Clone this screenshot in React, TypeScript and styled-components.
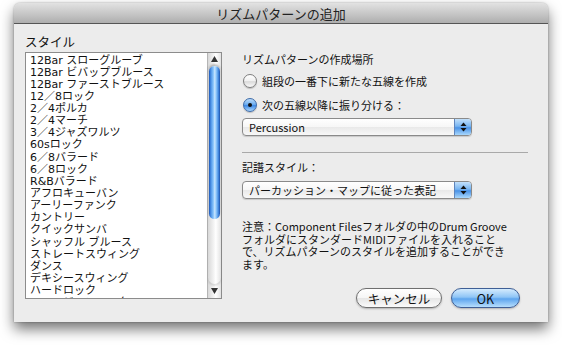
import React from 'react';
import styled, {createGlobalStyle} from 'styled-components';

const GlobalStyle = createGlobalStyle`
  html, body {
    margin: 0;
    padding: 0;
    background: #ffffff;
  }
  body {
    font-family: "Noto Sans CJK JP", "Liberation Sans", sans-serif;
    color: #111;
  }
`;

const Page = styled.div`
  width: 562px;
  height: 345px;
  padding: 3px 0 0 14px;
  box-sizing: border-box;
`;

const Window = styled.div`
  width: 534px;
  height: 319px;
  display: flex;
  flex-direction: column;
  background: #ececec;
  border-radius: 6px 6px 0 0;
  box-shadow: 0 7px 14px rgba(0, 0, 0, 0.55), 0 0 2px rgba(0, 0, 0, 0.35);
  overflow: hidden;
`;

const TitleBar = styled.div`
  height: 20px;
  flex: none;
  display: flex;
  align-items: center;
  justify-content: center;
  background: linear-gradient(#e2e2e2 0%, #cbcbcb 45%, #aeaeae 100%);
  border-bottom: 1px solid #555;
  font-size: 13px;
  color: #222;
`;

const Body = styled.div`
  flex: 1;
  display: flex;
  padding: 11px 0 0 11px;
`;

const LeftCol = styled.div`
  width: 197px;
  display: flex;
  flex-direction: column;
`;

const Label = styled.div<{$top?: number; $size?: number}>`
  font-size: ${p => p.$size ?? 11}px;
  line-height: 13px;
  margin-top: ${p => p.$top ?? 0}px;
  white-space: nowrap;
`;

const ListBox = styled.div`
  margin-top: 4px;
  height: 247px;
  box-sizing: border-box;
  border: 1px solid #8c8c8c;
  background: #fff;
  display: flex;
`;

const Items = styled.div`
  flex: 1;
  overflow: hidden;
  padding: 1.5px 0 0 4px;
`;

const Item = styled.div`
  font-family: "DejaVu Sans", "Noto Sans CJK JP", sans-serif;
  font-size: 11px;
  line-height: 12.15px;
  height: 12.15px;
  white-space: nowrap;
`;

const ScrollBar = styled.div`
  width: 13px;
  flex: none;
  display: flex;
  flex-direction: column;
  border-left: 1px solid #b5b5b5;
  background: linear-gradient(90deg, #d8d8d8, #f4f4f4 45%, #ffffff 60%, #e2e2e2);
`;

const Arrow = styled.div<{$h: number}>`
  height: ${p => p.$h}px;
  display: flex;
  align-items: center;
  justify-content: center;
`;

const Track = styled.div`
  flex: 1;
  display: flex;
  flex-direction: column;
  padding: 1px 0;
  border-radius: 0 0 7px 7px;
  box-shadow: 0 2px 2px rgba(0, 0, 0, 0.12);
`;

const Thumb = styled.div`
  height: 153px;
  margin: 0 1px;
  border-radius: 6px;
  background: linear-gradient(90deg, #1c56b8 0%, #4d94e8 18%, #8cc6fb 40%, #c8e6ff 52%, #7cbaf7 70%, #3a7fd9 88%, #1b4fa8 100%);
  box-shadow: 0 -2px 2px rgba(0, 0, 0, 0.25);
`;

const RightCol = styled.div`
  flex: 1;
  display: flex;
  flex-direction: column;
  margin-left: 20px;
  padding: 18px 20px 14px 0;
`;

const RadioRow = styled.div<{$top: number}>`
  display: flex;
  align-items: center;
  height: 16px;
  margin-top: ${p => p.$top}px;
  margin-left: 1px;
  gap: 5px;
  font-size: 11px;
`;

const Radio = styled.span<{$on?: boolean}>`
  width: 14px;
  height: 14px;
  box-sizing: border-box;
  border-radius: 50%;
  position: relative;
  border: 1px solid ${p => (p.$on ? '#3d6aa8' : '#7d7d7d')};
  background: ${p =>
    p.$on
      ? 'linear-gradient(#bcdcfa 0%, #6eaef0 45%, #3f8ae6 55%, #a9d6fd 100%)'
      : 'linear-gradient(#ffffff 0%, #f0f0f0 50%, #dadada 55%, #fbfbfb 100%)'};
  box-shadow: 0 1px 1px rgba(0, 0, 0, 0.2);

  &::after {
    content: '';
    display: ${p => (p.$on ? 'block' : 'none')};
    position: absolute;
    left: 4px;
    top: 4px;
    width: 4px;
    height: 4px;
    border-radius: 50%;
    background: #111;
  }
`;

const Popup = styled.div<{$top: number}>`
  margin-top: ${p => p.$top}px;
  width: 230px;
  height: 18px;
  box-sizing: border-box;
  border: 1px solid #8a8a8a;
  border-radius: 4px;
  display: flex;
  overflow: hidden;
  background: linear-gradient(#ffffff 0%, #f7f7f7 48%, #e9e9e9 52%, #f8f8f8 100%);
  box-shadow: 0 1px 1px rgba(0, 0, 0, 0.15);
`;

const PopupText = styled.div`
  flex: 1;
  padding-left: 6px;
  font-size: 11px;
  line-height: 16px;
  white-space: nowrap;
`;

const PopupArrows = styled.div`
  width: 16px;
  display: flex;
  align-items: center;
  justify-content: center;
  border-left: 1px solid #5f85bd;
  background: linear-gradient(#c2e0fb 0%, #78b5f1 45%, #4a92e6 55%, #a9d8fd 100%);
`;

const Separator = styled.div`
  margin-top: 16px;
  height: 1px;
  background: #a9a9a9;
`;

const Note = styled.div`
  margin-top: 21px;
  font-size: 11px;
  line-height: 12.5px;
  white-space: nowrap;
`;

const ButtonRow = styled.div`
  margin-top: auto;
  display: flex;
  justify-content: flex-end;
  gap: 9px;
  padding-right: 8px;
`;

const Button = styled.div<{$primary?: boolean; $w: number}>`
  width: ${p => p.$w}px;
  height: 20px;
  box-sizing: border-box;
  border-radius: 10px;
  display: flex;
  align-items: center;
  justify-content: center;
  font-size: 12.5px;
  color: #111;
  border: 1px solid ${p => (p.$primary ? '#3f5f96' : '#6f6f6f')};
  background: ${p =>
    p.$primary
      ? 'linear-gradient(#d4ebfd 0%, #8fc5f6 45%, #5ea5ee 55%, #b6defd 100%)'
      : 'linear-gradient(#ffffff 0%, #f6f6f6 48%, #e6e6e6 52%, #fafafa 100%)'};
  box-shadow: 0 1px 2px rgba(0, 0, 0, 0.25);
`;

const UpDown = () => (
  <svg width="7" height="10" viewBox="0 0 7 10">
    <polygon points="3.5,0.5 6.5,4 0.5,4" fill="#111" />
    <polygon points="0.5,6 6.5,6 3.5,9.5" fill="#111" />
  </svg>
);

const Tri = ({down}: {down?: boolean}) => (
  <svg width="7" height="6" viewBox="0 0 7 6">
    <polygon points={down ? '0,0 7,0 3.5,6' : '3.5,0 7,6 0,6'} fill="#333" />
  </svg>
);

const styles = [
  '12Bar スローグルーブ',
  '12Bar ビバップブルース',
  '12Bar ファーストブルース',
  '12／8ロック',
  '2／4ポルカ',
  '2／4マーチ',
  '3／4ジャズワルツ',
  '60sロック',
  '6／8バラード',
  '6／8ロック',
  'R&Bバラード',
  'アフロキューバン',
  'アーリーファンク',
  'カントリー',
  'クイックサンバ',
  'シャッフル ブルース',
  'ストレートスウィング',
  'ダンス',
  'デキシースウィング',
  'ハードロック',
  'フュージョンロック',
];

const App = () => {
  return (
    <Page>
      <GlobalStyle />
      <Window>
        <TitleBar>リズムパターンの追加</TitleBar>
        <Body>
          <LeftCol>
            <Label $size={12.5}>スタイル</Label>
            <ListBox>
              <Items>
                {styles.map(s => (
                  <Item key={s}>{s}</Item>
                ))}
              </Items>
              <ScrollBar>
                <Arrow $h={12}><Tri /></Arrow>
                <Track>
                  <Thumb />
                </Track>
                <Arrow $h={14}><Tri down /></Arrow>
              </ScrollBar>
            </ListBox>
          </LeftCol>
          <RightCol>
            <Label>リズムパターンの作成場所</Label>
            <RadioRow $top={7}>
              <Radio />
              <span>組段の一番下に新たな五線を作成</span>
            </RadioRow>
            <RadioRow $top={8}>
              <Radio $on />
              <span>次の五線以降に振り分ける：</span>
            </RadioRow>
            <Popup $top={5}>
              <PopupText>Percussion</PopupText>
              <PopupArrows><UpDown /></PopupArrows>
            </Popup>
            <Separator />
            <Label $top={8}>記譜スタイル：</Label>
            <Popup $top={7}>
              <PopupText>パーカッション・マップに従った表記</PopupText>
              <PopupArrows><UpDown /></PopupArrows>
            </Popup>
            <Note>
              注意：Component Filesフォルダの中のDrum Groove<br />
              フォルダにスタンダードMIDIファイルを入れること<br />
              で、リズムパターンのスタイルを追加することができ<br />
              ます。
            </Note>
            <ButtonRow>
              <Button $w={86}>キャンセル</Button>
              <Button $w={69} $primary>OK</Button>
            </ButtonRow>
          </RightCol>
        </Body>
      </Window>
    </Page>
  );
};

export default App;
